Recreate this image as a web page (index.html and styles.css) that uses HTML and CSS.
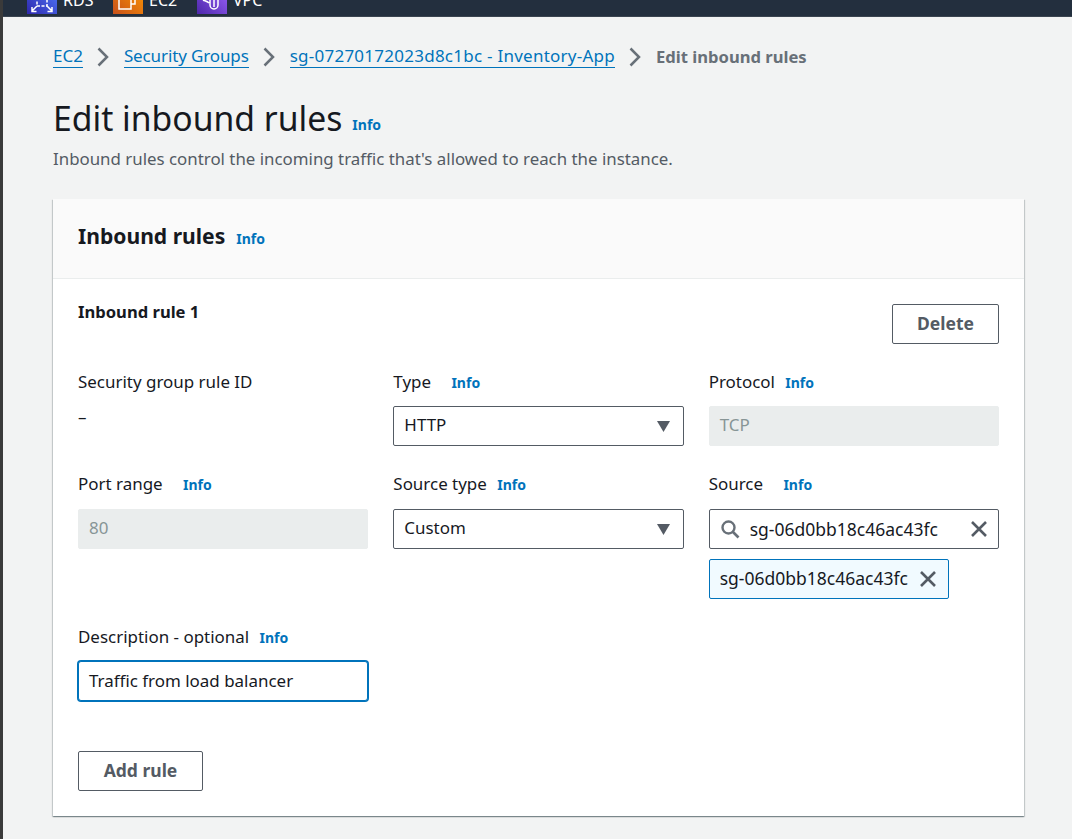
FILE: index.html
```html
<!DOCTYPE html>
<html lang="en">
<head>
    <meta charset="UTF-8">
    <meta name="viewport" content="width=device-width, initial-scale=1.0">
    <title>Edit inbound rules</title>
    <link rel="stylesheet" href="styles.css">
</head>
<body>
    <nav class="topbar">
        <div class="service">
            <span class="service-icon rds">
                <svg viewBox="0 0 30 30" width="30" height="30" fill="none" stroke="#fff" stroke-width="1.5"><path d="M10 12h10v10H10z" stroke-dasharray="3 1.5"/><path d="M5 27l5-5M5 23v4.500h4.500M25 27l-5-5M25 23v4.500h-4.500"/></svg>
            </span>
            <span class="service-name">RDS</span>
        </div>
        <div class="service">
            <span class="service-icon ec2">
                <svg viewBox="0 0 30 30" width="30" height="30" fill="none" stroke="#fff" stroke-width="1.500"><path d="M6 13h12v12H6z"/><path d="M18 20h4V10H10v3"/></svg>
            </span>
            <span class="service-name">EC2</span>
        </div>
        <div class="service">
            <span class="service-icon vpc">
                <svg viewBox="0 0 30 30" width="30" height="30" fill="none" stroke="#fff" stroke-width="1.500"><path d="M6 16c2 1 4 1 6 3M13 10v11a4 4 0 0 0 8 0V10"/><path d="M17 8v15"/></svg>
            </span>
            <span class="service-name">VPC</span>
        </div>
    </nav>

    <main class="content">
        <div class="breadcrumbs">
            <a href="#">EC2</a>
            <svg class="crumb-sep" viewBox="0 0 12 20" width="12" height="20"><path d="M1.500 1.500L10 10l-8.500 8.500" fill="none" stroke="#687078" stroke-width="2.500"/></svg>
            <a class="crumb-tight" href="#">Security Groups</a>
            <svg class="crumb-sep" viewBox="0 0 12 20" width="12" height="20"><path d="M1.500 1.500L10 10l-8.500 8.500" fill="none" stroke="#687078" stroke-width="2.500"/></svg>
            <a class="crumb-wide" href="#">sg-07270172023d8c1bc - Inventory-App</a>
            <svg class="crumb-sep" viewBox="0 0 12 20" width="12" height="20"><path d="M1.500 1.500L10 10l-8.500 8.500" fill="none" stroke="#687078" stroke-width="2.500"/></svg>
            <span class="crumb-current">Edit inbound rules</span>
        </div>

        <div class="page-title">
            <h1>Edit inbound rules</h1>
            <a class="info" href="#">Info</a>
        </div>
        <p class="page-desc">Inbound rules control the incoming traffic that's allowed to reach the instance.</p>

        <section class="card">
            <div class="card-header">
                <h2>Inbound rules</h2>
                <a class="info" href="#">Info</a>
            </div>
            <div class="card-body">
                <div class="rule-head">
                    <h3>Inbound rule 1</h3>
                    <button class="btn btn-delete">Delete</button>
                </div>

                <div class="rule-grid">
                    <div class="field field-tight">
                        <div class="field-label">Security group rule ID</div>
                        <div class="field-dash">–</div>
                    </div>
                    <div class="field field-tight">
                        <div class="field-label">Type <a class="info info-wide" href="#">Info</a></div>
                        <div class="control">
                            <span>HTTP</span>
                            <svg class="caret" viewBox="0 0 13 11" width="13" height="11"><path d="M0 0h13L6.500 11z" fill="#545b64"/></svg>
                        </div>
                    </div>
                    <div class="field field-tight">
                        <div class="field-label">Protocol <a class="info" href="#">Info</a></div>
                        <div class="control control-disabled">TCP</div>
                    </div>

                    <div class="field">
                        <div class="field-label">Port range <a class="info info-wide" href="#">Info</a></div>
                        <div class="control control-disabled">80</div>
                    </div>
                    <div class="field">
                        <div class="field-label">Source type <a class="info" href="#">Info</a></div>
                        <div class="control">
                            <span>Custom</span>
                            <svg class="caret" viewBox="0 0 13 11" width="13" height="11"><path d="M0 0h13L6.500 11z" fill="#545b64"/></svg>
                        </div>
                    </div>
                    <div class="field">
                        <div class="field-label">Source <a class="info info-wide" href="#">Info</a></div>
                        <div class="control control-search">
                            <svg class="search-icon" viewBox="0 0 20 20" width="20" height="20"><circle cx="8.500" cy="8.500" r="6" fill="none" stroke="#687078" stroke-width="2.400"/><path d="M13 13l5.500 5.500" stroke="#687078" stroke-width="2.600"/></svg>
                            <span class="search-text">sg-06d0bb18c46ac43fc</span>
                            <svg viewBox="0 0 18 18" width="18" height="18"><path d="M2 2l14 14M16 2L2 16" stroke="#545b64" stroke-width="2.600"/></svg>
                        </div>
                        <div class="token">
                            <span>sg-06d0bb18c46ac43fc</span>
                            <svg viewBox="0 0 18 18" width="18" height="18"><path d="M2 2l14 14M16 2L2 16" stroke="#545b64" stroke-width="2.600"/></svg>
                        </div>
                    </div>

                    <div class="field field-tight">
                        <div class="field-label">Description - optional <a class="info" href="#">Info</a></div>
                        <div class="control control-focus">Traffic from load balancer</div>
                    </div>
                </div>

                <button class="btn btn-add">Add rule</button>
            </div>
        </section>
    </main>
</body>
</html>
```

FILE: styles.css
```css
/* General Styles */
* {
    box-sizing: border-box;
}

html, body {
    height: 100%;
}

body {
    margin: 0;
    height: 839px;
    overflow: hidden;
    background: #f2f3f3;
    color: #16191f;
    font-family: "Noto Sans", "Open Sans", sans-serif;
    font-size: 16.95px;
    border-left: 3px solid #3a3a3a;
}

a {
    color: #0073bb;
    text-decoration: none;
}

/* Top bar, cut off by the top of the window */
.topbar {
    display: flex;
    align-items: flex-end;
    height: 17px;
    margin-left: -3px;
    padding-left: 27px;
    background: #232f3e;
    border-bottom: 1px solid #3a4450;
    overflow: hidden;
}

.service {
    display: flex;
    align-items: center;
    height: 30px;
    flex: none;
    margin-bottom: 2px;
    color: #fff;
    font-size: 16px;
}

.service-icon {
    width: 30px;
    height: 30px;
    margin-right: 6px;
}

.service-name {
    width: 50px;
    margin-top: 2px;
}

.service:nth-child(2) .service-name {
    width: 48px;
}

.rds { background: linear-gradient(45deg, #2e27ad, #527fff); }
.ec2 { background: linear-gradient(45deg, #c8511b, #ff9900); }
.vpc { background: linear-gradient(45deg, #4d27aa, #a166ff); }

.content {
    padding: 26px 48px 0 50px;
}

.breadcrumbs {
    display: flex;
    align-items: center;
    height: 26px;
    font-size: 17px;
}

.breadcrumbs a {
    border-bottom: 1px solid #0073bb;
    line-height: 23px;
}

.crumb-tight {
    letter-spacing: -0.13px;
}

.crumb-wide {
    letter-spacing: 0.25px;
}

.crumb-sep {
    margin: 1px 15px 0 14px;
}

.crumb-current {
    color: #687078;
    font-weight: 700;
    font-size: 16.6px;
}

.page-title {
    display: flex;
    align-items: baseline;
    margin-top: 26px;
}

h1 {
    margin: 0;
    font-size: 33.7px;
    font-weight: 400;
    line-height: 46px;
}

.info {
    font-size: 14px;
    font-weight: 700;
}

.page-title .info {
    margin-left: 10px;
    position: relative;
    top: -1px;
}

.page-desc {
    margin: 6px 0 0;
    color: #545b64;
    font-size: 16.88px;
    line-height: 24px;
}

.card {
    margin-top: 28px;
    background: #fff;
    box-shadow: 0 1px 1px 0 rgba(0, 28, 36, 0.3), 1px 1px 1px 0 rgba(0, 28, 36, 0.15), -1px 1px 1px 0 rgba(0, 28, 36, 0.15);
}

.card-header {
    display: flex;
    align-items: baseline;
    height: 80px;
    padding: 22px 25px 0;
    background: #fafafa;
    border-bottom: 1px solid #eaeded;
}

h2 {
    margin: 0;
    font-size: 21.1px;
    font-weight: 700;
    line-height: 30px;
}

.card-header .info {
    margin-left: 11px;
}

.card-body {
    padding: 25px;
}

.rule-head {
    display: flex;
    justify-content: space-between;
    align-items: flex-start;
}

h3 {
    margin: -4px 0 0;
    font-size: 16.6px;
    font-weight: 700;
    line-height: 24px;
}

.btn {
    height: 40px;
    padding: 0 0 2px;
    background: #fff;
    border: 1px solid #545b64;
    border-radius: 2px;
    color: #545b64;
    font-family: inherit;
    font-size: 17.5px;
    font-weight: 700;
}

.btn-delete {
    width: 107px;
}

.btn-add {
    display: block;
    width: 125px;
    margin-top: 50px;
    padding-bottom: 3px;
}

.rule-grid {
    display: grid;
    grid-template-columns: repeat(3, 1fr);
    column-gap: 25px;
    row-gap: 26px;
    margin-top: 26px;
}

.field-label {
    line-height: 24px;
    margin-bottom: 12px;
    white-space: nowrap;
}

.field-tight .field-label {
    margin-bottom: 11px;
}

.field-label .info {
    margin-left: 6px;
}

.field-label .info-wide {
    margin-left: 16px;
}

.field-dash {
    margin-top: 4px;
    line-height: 24px;
}

.control {
    display: flex;
    align-items: center;
    justify-content: space-between;
    height: 40px;
    padding: 0 10px 3px;
    background: #fff;
    border: 1px solid #545b64;
    border-radius: 2px;
}

.control-disabled {
    background: #eaeded;
    border-color: #eaeded;
    color: #879596;
}

.control-focus {
    border-color: #0073bb;
    padding-bottom: 2px;
    border-radius: 3px;
    box-shadow: 0 0 0 1px #0073bb;
}

.caret {
    margin-right: 3px;
    margin-top: 3px;
}

.control-search {
    justify-content: flex-start;
    padding: 0 10px;
    font-size: 17.5px;
}

.search-icon {
    margin-right: 10px;
}

.search-text {
    flex: 1;
}

.token {
    display: inline-flex;
    align-items: center;
    height: 40px;
    margin-top: 10px;
    padding: 0 11px 3px 10px;
    background: #f1faff;
    border: 1px solid #0073bb;
    border-radius: 2px;
    font-size: 17.5px;
}

.token svg {
    margin: 3px 0 0 11px;
}
```
